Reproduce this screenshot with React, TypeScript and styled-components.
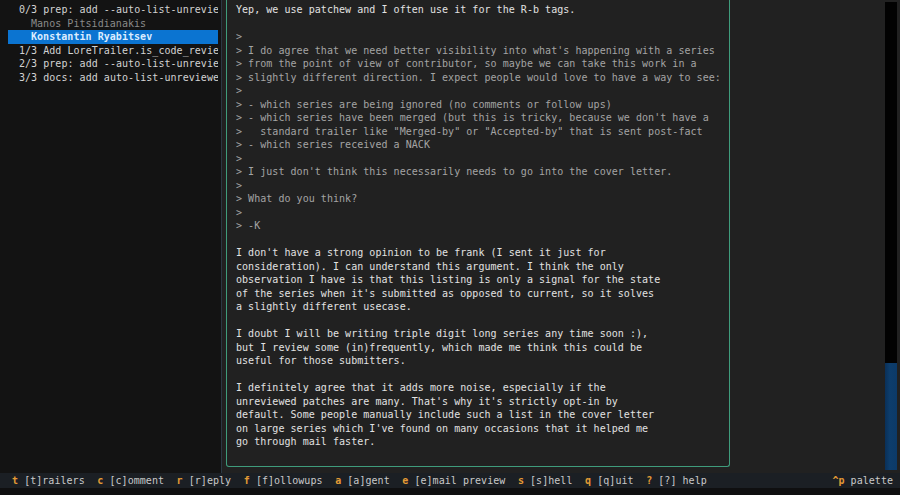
import styled, { createGlobalStyle } from 'styled-components';

const GlobalStyle = createGlobalStyle`
  html, body {
    margin: 0;
    padding: 0;
    background: #0f0f10;
  }
  body {
    font-family: 'DejaVu Sans Mono', 'Liberation Mono', monospace;
    font-size: 10px;
    letter-spacing: 0.04px;
  }
`;

const Screen = styled.div`
  width: 900px;
  height: 495px;
  display: flex;
  flex-direction: column;
  background: #0f0f10;
  overflow: hidden;
`;

const Main = styled.div`
  display: flex;
  height: 473px;
`;

const SeriesPane = styled.div`
  width: 222px;
  flex-shrink: 0;
  background: #131313;
  border-right: 1px solid #2b3844;
  padding: 3px 3px 0 8px;
  box-sizing: border-box;
`;

const SeriesRow = styled.div<{ $depth: number; $selected?: boolean; $dim?: boolean }>`
  height: 13.5px;
  line-height: 13.5px;
  padding-left: ${(p) => 11 + p.$depth * 12}px;
  white-space: pre;
  overflow: hidden;
  color: ${(p) => (p.$selected ? '#dcecff' : p.$dim ? '#8a8a8a' : '#d2d2d2')};
  background: ${(p) => (p.$selected ? '#0b74d1' : 'transparent')};
  font-weight: ${(p) => (p.$selected ? 700 : 400)};
`;

const ReaderPane = styled.div`
  flex: 1;
  display: flex;
  background: #212121;
  padding-left: 4px;
`;

const ReaderBody = styled.div`
  flex: 1;
  display: flex;
  align-items: flex-start;
`;

const MessageCard = styled.div`
  width: 504px;
  height: 467px;
  box-sizing: border-box;
  border: 1px solid #3f9c7c;
  border-top: none;
  border-radius: 0 0 3px 3px;
  padding: 3px 9px 0 9px;
`;

const Line = styled.div<{ $quote?: boolean }>`
  height: 13.5px;
  line-height: 13.5px;
  white-space: pre;
  color: ${(p) => (p.$quote ? '#a4a4a4' : '#e2e2e2')};
`;

const Scrollbar = styled.div`
  width: 12px;
  margin-right: 3px;
  display: flex;
  flex-direction: column;
  background: #020202;
  margin-top: 2px;
  height: 468px;
`;

const Thumb = styled.div`
  margin-top: auto;
  height: 107px;
  background: linear-gradient(90deg, #0a3058 0%, #0d3d6c 40%, #0c3a68 100%);
`;

const StatusBar = styled.div`
  height: 15px;
  line-height: 15px;
  background: #1b1f24;
  display: flex;
  padding: 0 7px 0 12px;
  white-space: pre;
  color: #c9c9c9;
`;

const Hints = styled.div`
  flex: 1;
  display: flex;
  gap: 12.6px;
`;

const Key = styled.span`
  color: #e39a35;
  font-weight: 700;
`;

const series: { text: string; depth: number; selected?: boolean; dim?: boolean }[] = [
  { text: '0/3 prep: add --auto-list-unreviewed', depth: 0 },
  { text: 'Manos Pitsidianakis', depth: 1, dim: true },
  { text: 'Konstantin Ryabitsev', depth: 1, selected: true },
  { text: '1/3 Add LoreTrailer.is_code_review_trailer', depth: 0 },
  { text: '2/3 prep: add --auto-list-unreviewed', depth: 0 },
  { text: '3/3 docs: add auto-list-unreviewed', depth: 0 },
];

const message = `Yep, we use patchew and I often use it for the R-b tags.

>
> I do agree that we need better visibility into what's happening with a series
> from the point of view of contributor, so maybe we can take this work in a
> slightly different direction. I expect people would love to have a way to see:
>
> - which series are being ignored (no comments or follow ups)
> - which series have been merged (but this is tricky, because we don't have a
>   standard trailer like "Merged-by" or "Accepted-by" that is sent post-fact
> - which series received a NACK
>
> I just don't think this necessarily needs to go into the cover letter.
>
> What do you think?
>
> -K

I don't have a strong opinion to be frank (I sent it just for
consideration). I can understand this argument. I think the only
observation I have is that this listing is only a signal for the state
of the series when it's submitted as opposed to current, so it solves
a slightly different usecase.

I doubt I will be writing triple digit long series any time soon :),
but I review some (in)frequently, which made me think this could be
useful for those submitters.

I definitely agree that it adds more noise, especially if the
unreviewed patches are many. That's why it's strictly opt-in by
default. Some people manually include such a list in the cover letter
on large series which I've found on many occasions that it helped me
go through mail faster.`;

const hints = [
  ['t', '[t]railers'],
  ['c', '[c]omment'],
  ['r', '[r]eply'],
  ['f', '[f]ollowups'],
  ['a', '[a]gent'],
  ['e', '[e]mail preview'],
  ['s', '[s]hell'],
  ['q', '[q]uit'],
  ['?', '[?] help'],
];

export default function App() {
  return (
    <Screen>
      <GlobalStyle />
      <Main>
        <SeriesPane>
          {series.map((row, index) => (
            <SeriesRow key={index} $depth={row.depth} $selected={row.selected} $dim={row.dim}>
              {row.text}
            </SeriesRow>
          ))}
        </SeriesPane>
        <ReaderPane>
          <ReaderBody>
            <MessageCard>
              {message.split('\n').map((line, index) => (
                <Line key={index} $quote={line.startsWith('>')}>
                  {line || ' '}
                </Line>
              ))}
            </MessageCard>
          </ReaderBody>
          <Scrollbar>
            <Thumb />
          </Scrollbar>
        </ReaderPane>
      </Main>
      <StatusBar>
        <Hints>
          {hints.map(([key, label]) => (
            <span key={key}>
              <Key>{key}</Key> {label}
            </span>
          ))}
        </Hints>
        <span>
          <Key>^p</Key> palette
        </span>
      </StatusBar>
    </Screen>
  );
}
